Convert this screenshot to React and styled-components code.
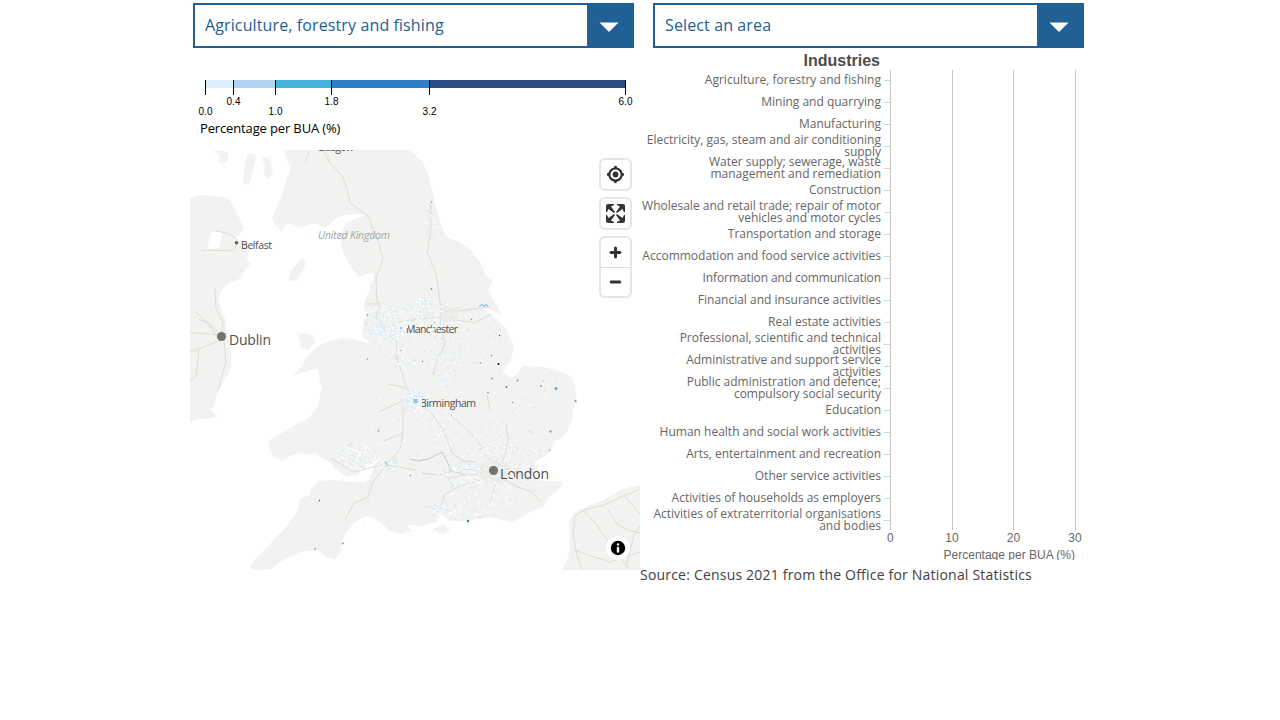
import React from "react";
import styled, { createGlobalStyle } from "styled-components";

const GlobalStyle = createGlobalStyle`
  body { margin: 0; background: #fff; font-family: "Open Sans", "Noto Sans", sans-serif; color: #414042; }
  * { box-sizing: border-box; }
`;

const Page = styled.main`
  width: 900px;
  height: 720px;
  margin: 0 auto;
  display: grid;
  grid-template-columns: 450px 450px;
`;
const Column = styled.section`
  display: flex;
  flex-direction: column;
  min-width: 0;
`;
const Select = styled.div`
  display: flex;
  flex: none;
  width: ${(p) => p.$width}px;
  height: 45px;
  margin: 3px 0 0 ${(p) => p.$indent}px;
  border: 2px solid #206095;
  background: #fff;
`;
const SelectValue = styled.div`
  flex: 1;
  padding-left: 10px;
  font-size: 16px;
  line-height: 40px;
  letter-spacing: 0.12px;
  font-feature-settings: "liga" 1;
  color: #206095;
`;
const SelectArrow = styled.div`
  width: 45px;
  display: flex;
  align-items: center;
  justify-content: center;
  background: #206095;
  padding: 4px 1px 0 0;
`;

const Legend = styled.div`
  flex: none;
  height: 102px;
  padding: 32px 0 0 15px;
`;
const Bar = styled.div`
  display: flex;
  width: 421px;
  height: 39px;
`;
const Segment = styled.div`
  width: ${(p) => p.$width}px;
`;
const Swatch = styled.div`
  height: 15px;
  border-left: 1px solid #000;
  border-right: ${(p) => (p.$last ? "1px solid #000" : "0")};
  &::before { content: ""; display: block; height: 8px; background: ${(p) => p.$color}; }
`;
const TickLabels = styled.div`
  display: flex;
  justify-content: space-between;
  width: ${(p) => p.$width + 29}px;
  margin-left: -14.5px;
  font: 10px/12px "Liberation Sans", Arial, sans-serif;
  color: #000;
`;
const Tick = styled.span`
  width: 30px;
  flex: none;
  text-align: center;
  padding-top: ${(p) => (p.$low ? 11 : 1)}px;
`;
const LegendTitle = styled.div`
  margin: 0 0 0 -5px;
  font-size: 13px;
  line-height: 18px;
  letter-spacing: -0.14px;
  color: #000;
`;

const MapFrame = styled.div`
  position: relative;
  width: 450px;
  height: 420px;
  overflow: hidden;
  & > svg { display: block; }
`;
const MapControls = styled.div`
  position: absolute;
  top: 10px;
  right: 10px;
  display: flex;
  flex-direction: column;
  gap: 10px;
`;
const ControlGroup = styled.div`
  width: 29px;
  border-radius: 4px;
  background: #fff;
  box-shadow: 0 0 0 2px rgba(0, 0, 0, 0.1);
`;
const ControlButton = styled.button`
  display: block;
  width: 29px;
  height: 29px;
  padding: 0;
  border: 0;
  background: none;
  & + & { border-top: 1px solid #ddd; }
  svg { display: block; }
`;
const Info = styled.div`
  position: absolute;
  right: 10px;
  bottom: 10px;
  width: 24px;
  height: 24px;
  border-radius: 12px;
  background: #fff;
`;

const Chart = styled.div`
  height: 512px;
  overflow: hidden;
`;
const ChartTitle = styled.div`
  width: 240px;
  height: 22px;
  text-align: right;
  font: bold 16px/25px "Liberation Sans", Arial, sans-serif;
  color: #4d4d4d;
`;
const ChartBody = styled.div`
  display: flex;
`;
const Labels = styled.div`
  width: 241px;
  margin-top: -1px;
`;
const Label = styled.div`
  height: 22px;
  display: flex;
  flex-direction: column;
  justify-content: center;
  text-align: right;
  white-space: nowrap;
  font-size: 12px;
  line-height: 12px;
  letter-spacing: ${(p) => (p.$tight ? "-0.1px" : "normal")};
  color: #666;
`;
const Axis = styled.svg`
  display: block;
`;
const AxisValues = styled.div`
  display: flex;
  margin: -1px 0 0 235.5px;
  gap: 31.67px;
  font: 12px/16px "Liberation Sans", Arial, sans-serif;
  color: #666;
  span { width: 30px; text-align: center; }
`;
const AxisTitle = styled.div`
  width: 435px;
  text-align: right;
  font: 12px/18px "Liberation Sans", Arial, sans-serif;
  color: #666;
`;
const Source = styled.div`
  font-size: 14px;
  line-height: 30px;
  letter-spacing: 0.2px;
  color: #414042;
`;

const industries = [
  ["Agriculture, forestry and fishing"],
  ["Mining and quarrying"],
  ["Manufacturing"],
  ["Electricity, gas, steam and air conditioning", "supply"],
  ["Water supply; sewerage, waste", "management and remediation"],
  ["Construction"],
  ["Wholesale and retail trade; repair of motor", "vehicles and motor cycles"],
  ["Transportation and storage"],
  ["Accommodation and food service activities"],
  ["Information and communication"],
  ["Financial and insurance activities"],
  ["Real estate activities"],
  ["Professional, scientific and technical", "activities"],
  ["Administrative and support service", "activities"],
  ["Public administration and defence;", "compulsory social security"],
  ["Education"],
  ["Human health and social work activities"],
  ["Arts, entertainment and recreation"],
  ["Other service activities"],
  ["Activities of households as employers"],
  ["Activities of extraterritorial organisations", "and bodies"],
];

const bands = [
  { from: "0.0", width: 28, color: "#daedfc", low: true },
  { from: "0.4", width: 42, color: "#b0d3f1" },
  { from: "1.0", width: 56, color: "#43b3db", low: true },
  { from: "1.8", width: 98, color: "#2f7fc6" },
  { from: "3.2", width: 197, color: "#2b4c87", low: true, to: "6.0" },
];

const Arrow = () => (
  <svg width="20" height="11" viewBox="0 0 20 11"><path d="M0.5 0.5h19L10 10z" fill="#fff" /></svg>
);

// Built-up areas, grouped: centre x, centre y, spread x, spread y, count
const clusters = [
  [385, 325, 22, 20, 190], [410, 322, 28, 18, 150], [437, 318, 20, 17, 90], [430, 217, 7, 20, 60],
  [445, 352, 16, 34, 130], [412, 401, 13, 11, 110], [432, 412, 22, 14, 60], [386, 332, 10, 8, 60],
  [400, 357, 7, 14, 40], [424, 301, 8, 5, 40],
  [355, 456, 22, 14, 120], [388, 462, 11, 10, 50], [492, 476, 50, 32, 300], [470, 440, 38, 32, 150],
  [430, 375, 24, 30, 75], [465, 476, 28, 12, 90], [437, 510, 16, 9, 50], [420, 450, 55, 40, 90],
  [518, 460, 30, 25, 90], [460, 510, 34, 9, 80], [540, 410, 28, 35, 40], [470, 340, 32, 34, 50],
  [370, 490, 35, 34, 40], [360, 420, 32, 30, 12], [450, 270, 26, 22, 14], [398, 350, 20, 25, 55],
];
const shades = ["#ffffff", "#ffffff", "#fafdff", "#e2f0fb", "#daedfc", "#cfe5f6", "#ffffff", "#dfe6e7"];
const specks = (() => {
  let s = 4711;
  const rnd = () => (s = (s * 16807) % 2147483647) / 2147483647;
  return clusters.flatMap(([cx, cy, rx, ry, n]) =>
    Array.from({ length: n }, () => {
      const a = rnd() * Math.PI * 2;
      const r = Math.sqrt(rnd());
      return {
        x: cx + Math.cos(a) * r * rx,
        y: cy + Math.sin(a) * r * ry,
        w: 0.7 + rnd() * 1.4,
        h: 0.7 + rnd() * 1.1,
        fill: shades[Math.floor(rnd() * shades.length)],
      };
    })
  );
})();

// Areas with a high share: x, y, colour, size
const hotspots = [
  [498.5, 364, "#16233f", 1.8], [506.5, 387, "#2b4c87", 1.5], [499.5, 335.5, "#2b4c87", 1.2], [491.5, 355.5, "#5c86ad", 1.3],
  [492, 378.5, "#5c86ad", 1.5], [517.5, 380.5, "#5c86ad", 1.5], [488, 392.5, "#5aa0cd", 1.6], [512.5, 402.5, "#5c86ad", 1.2],
  [541, 386, "#5aa0cd", 1.5], [556, 388.5, "#5a9bd2", 2.4], [575.5, 401, "#5aa0cd", 1.8], [550.5, 431.5, "#5c86ad", 1.8],
  [549.5, 450, "#5aa0cd", 1.3], [531, 432, "#b0d3f1", 1.5], [468, 521, "#2f7fa6", 2.2], [480, 517, "#8ed0e6", 1.2],
  [319.5, 500.5, "#2b4c87", 1.2], [315, 549, "#5c86ad", 1.4], [343, 543.5, "#5c86ad", 1.5], [367.5, 315, "#5c86ad", 1.2],
  [367.5, 359, "#5c86ad", 1.2], [378.5, 431, "#5c86ad", 1.3], [410.5, 475.5, "#5c86ad", 1.2], [431.5, 202, "#5c86ad", 1.2],
  [431.5, 289, "#5c86ad", 1.4], [471.5, 319.5, "#5c86ad", 1.2], [422.5, 361.5, "#5c86ad", 1.2], [480.5, 363, "#5c86ad", 1.2],
  [415.5, 401, "#9cc0de", 4], [543.5, 381, "#b0d3f1", 1.5], [401, 328, "#8db7db", 1.8], [401, 350.5, "#5c86ad", 1],
];

const Specks = ({ items }) =>
  items.map((p, i) => <rect key={i} x={p.x} y={p.y} width={p.w} height={p.h} fill={p.fill} />);

const BaseMap = () => (
  <svg width="450" height="420" viewBox="190 150 450 420">
    <defs>
      <clipPath id="gb">
        <path d="M284 150H410L417 157L427 172L433 195L440 222L447 237L463 245L480 262L493 280L490 288L496 302L502 315L510 338L513 352L510 362L502 372L513 377L523 366L543 367L563 372L575 385L577 402L568 430L555 440L550 452L533 465L548 480H563L560 488L543 507L513 522L465 521L437 522L405 533L385 527L370 516L342 545L334 560L320 550L283 560L250 568L285 535L311 489L350 482H366L382 456L357 475L330 462L272 455L268 445L318 410V368L293 375L330 341L364 342V303L340 240Z" />
      </clipPath>
    </defs>
    <g fill="#f2f2f0">
      <path d="M284 150L287 160L291 167L286 182L283 192L276 210L272 217L275 225L282 232L285 225L290 223.5L297 227L306 226L313 223.5L318 224L324 228L330 224L335 219L345 215L356 214L367 215.5L355 218L345 225L340 236L341 245L343 252L347 260L353 270L360 277L366 274L373 273L374 279L370 283L370 290L367 297L364 303L364 309L367 313L364 320L362 330L363 337L371 344L361 341L345 338L330 341L318 346L308 355L302 366L293 375L302 373L317 368L320 378L319 383L322 387L320 393L319 404L310 417L287 430L270 440L268 445L272 455L282 461L290 456L302 453L308 455L315 453L321 457L330 462L337 470L347 477L357 475L366 467L382 456L375 464L371 475L366 482L350 482L335 480L318 481L311 489L310 495L300 499L297 513L285 528L270 544L261 553L254 560L249 568L256 570L271 569L283 560L300 552L318 550L327 557L335 560L341 552L342 542L346 532L355 522L368 516L380 522L390 531L400 534L412 531L407 525L421 526L437 522L438 514L443 515L450 521H465L478 519L489 517L513 522L526 514L543 507L548 498L560 488L563 481H546L520 476L536 473L539 466L533 464L550 452L555 440L560 439L568 430L572 420L573 409L577 402L575 385L572 378L563 372L543 367L523 366L517 374L511 378L502 371L510 362L513 352L514 346L510 338L506 329L500 322L493 316L480 306L490 309L502 315L499 309L492 298L488 290L493 280L486 276L480 262L471 250L463 245L457 241L447 237L443 230L440 222L437 210L433 195L430 183L427 172L423 162L417 157L410 150Z" />
      <path d="M190 198L201 195L214 196L224 197L230 200L234 208L238 215L244 229L240 234L234 239L247 242L249 253L246 260L252 262L246 269L238 280L230 282L220 292L219 303L225 319L228 336L231 350L231 365L229 374L223 382L217 394L215 403L211 410L217 417L208 419L196 419L190 423Z" />
      <path d="M248 154Q245 160 244 170Q242 182 245 185L249 184L253 172L256 159Q256 154 252 153Z" />
      <path d="M262 158L267 157L271 163L273 173L268 178L263 174L265 167Z" />
      <path d="M213 151L225 151Q230 154 228 160L224 164L218 162L220 157Z" />
      <path d="M302 258L306 263L303 270L296 281L288 280L291 271Z" />
      <path d="M298 335L304 333L313 336L315 343L308 350L301 348Z" />
      <path d="M433 529L443 524L450 530L443 535Z" />
      <path d="M640 485L622 489L604 500L590 505L574 513L569 522L570 543L568 559L562 570H640Z" />
    </g>
    <path d="M211 232H222L219 248L207 249Z" fill="#fff" />
    <g fill="none" stroke="#dbdbd8" strokeWidth="1">
      <path d="M215 231Q232 233 237 240L235 250Q223 251 201 250" />
      <path d="M215 287L216 309L223 322L222 336L196 312M222 336L215 334L209 324L199 319M222 336Q210 333 190 333M221 340L201 348L190 352M224 340L226 362L218 390M199 350L196 376L190 381M305 162L310 150" />
      <path d="M323 150L330 163L343 177L348 193L350 203L369 217L374 233L378 240L383 259L379 270L376 277L377 302L380 304H366" />
      <path d="M428 254L436 273L438 287L441 308L450 312L490 307M380 305L376 317L384 328L402 321L441 317L456 320L475 323L491 314M441 308L440 326L445 344L438 358L433 375" />
      <path d="M431 203V228L427 254M384 333L397 341L396 355L407 388L415 400L432 414L444 431L452 453L463 461L478 462M388 384L407 388M403 400V432L400 449L386 465L373 482L368 497L354 503L345 520M384 441L403 433M386 465L416 470M330 458L354 472L385 464M450 414L478 440L483 452L492 463M487 395L490 410M506 424L508 441L502 466M453 487L448 479L462 475L485 474M440 510L444 495L460 486L480 480M496 483L490 502M504 480L518 487L532 492L541 502M378 412L405 400" />
      <path d="M639 490L625 495L604 505L584 510L575 516L573 535L577 555L582 570M583 510L596 524L605 537L630 570M608 510L617 524L630 531L640 533M625 496L640 514M574 550L594 557L610 562L640 552M626 567L634 535L640 526" />
    </g>
    <path d="M422 473L438 475L449 472M451 471L464 474" fill="none" stroke="#d0d6d6" strokeWidth="0.9" />
    <path d="M410 459L418 461L428 459L434 456L442 452L447 461L451 472" fill="none" stroke="#b3c3c5" strokeWidth="0.9" />
    <path d="M480 466L491 457L507 462L512 474L500 485L486 481L476 475ZM440 309L460 307L456 321L441 321Z" fill="#ebebe7" />
    <ellipse cx="413" cy="400" rx="10" ry="7" fill="#e6f2fb" />
    <ellipse cx="377" cy="331" rx="8" ry="5" fill="#e7f3fb" />
    <ellipse cx="424" cy="302" rx="7" ry="3" fill="#e7f3fb" />
    <path d="M344 444L352 455M365 442L356 461M348 449L367 453M475 467L467 477L481 484" fill="none" stroke="#fff" strokeWidth="1" />
    <g clipPath="url(#gb)"><Specks items={specks} /></g>
    <path d="M479 306.5l3-2 2 2 2-2 2 2M385 461l3 5" fill="none" stroke="#9dcaea" strokeWidth="1.4" />
    <path d="M457 474l7-5 10 1 4 3" fill="none" stroke="#c9e2f0" strokeWidth="1" />
    <rect x="417" y="293" width="6" height="4" fill="#fbf3ea" />
    {hotspots.map(([x, y, c, r], i) => (
      <rect key={i} x={x - r / 2} y={y - r / 2} width={r} height={r} fill={c} />
    ))}
    <g fontFamily='"Open Sans", "Noto Sans", sans-serif' fill="#50504c">
      <text x="317" y="151.3" fontSize="10.5" textLength="37">Glasgow</text>
      <text x="318" y="239" fontSize="10.5" fontStyle="italic" fill="#a4a4a4" textLength="72">United Kingdom</text>
      <text x="241" y="249" fontSize="10.5" textLength="31">Belfast</text>
      <text x="229" y="345" fontSize="14" textLength="42">Dublin</text>
      <text x="406" y="333" fontSize="10.5" textLength="52">Manchester</text>
      <text x="420" y="407" fontSize="10.5" textLength="56">Birmingham</text>
      <text x="500" y="479" fontSize="14" textLength="49">London</text>
    </g>
    <g fill="#f5f6f5">
      <path d="M405 325h3v3h-2v3h-2zM430 329l3-2 2 3-2 3h-3zM435 325h2v4h-2zM420 399h2v9h-1v-4h-1zM431 399h3v2h-3zM510 472l4 2v5l-3-2zM506 475h4v2h-4z" />
    </g>
    <path d="M432 332l4-2M437 327v3M440 331l2-2" stroke="#a5cfec" strokeWidth="1" />
    <circle cx="221.5" cy="336.5" r="4.5" fill="#73736f" />
    <circle cx="493.5" cy="470.5" r="4.5" fill="#73736f" />
    <circle cx="236.5" cy="242.7" r="1.8" fill="#666662" />
  </svg>
);

const LocateIcon = () => (
  <svg width="29" height="29" viewBox="0 0 20 20" fill="#333">
    <path d="M10 4C9 4 9 5 9 5v.1A5 5 0 0 0 5.1 9H5s-1 0-1 1 1 1 1 1h.1A5 5 0 0 0 9 14.9v.1s0 1 1 1 1-1 1-1v-.1a5 5 0 0 0 3.9-3.9h.1s1 0 1-1-1-1-1-1h-.1A5 5 0 0 0 11 5.1V5s0-1-1-1m0 2.5a3.5 3.5 0 1 1 0 7 3.5 3.5 0 1 1 0-7" />
    <circle cx="10" cy="10" r="2" />
  </svg>
);
const FullscreenIcon = () => (
  <svg width="29" height="29" viewBox="0 0 29 29" fill="#333">
    <path d="M24 16v5.5c0 1.75-.75 2.5-2.5 2.5H16v-1l3-1.5-4-5.5 1-1 5.5 4 1.5-3zM6 16l1.5 3 5.5-4 1 1-4 5.5 3 1.5v1H7.5C5.75 24 5 23.25 5 21.5V16zm7-11v1l-3 1.5 4 5.5-1 1-5.5-4L6 13H5V7.5C5 5.75 5.75 5 7.5 5zm11 2.5c0-1.75-.75-2.5-2.5-2.5H16v1l3 1.5-4 5.5 1 1 5.5-4 1.5 3h1z" />
  </svg>
);
const ZoomInIcon = () => (
  <svg width="29" height="29" viewBox="0 0 29 29" fill="#333">
    <path d="M14.5 8.5c-.75 0-1.5.75-1.5 1.5v3h-3c-.75 0-1.5.75-1.5 1.5S9.25 16 10 16h3v3c0 .75.75 1.5 1.5 1.5S16 19.75 16 19v-3h3c.75 0 1.5-.75 1.5-1.5S19.75 13 19 13h-3v-3c0-.75-.75-1.5-1.5-1.5" />
  </svg>
);
const ZoomOutIcon = () => (
  <svg width="29" height="28" viewBox="0 0 29 29" fill="#333">
    <path d="M10 13c-.75 0-1.5.75-1.5 1.5S9.25 16 10 16h9c.75 0 1.5-.75 1.5-1.5S19.75 13 19 13z" />
  </svg>
);
const InfoIcon = () => (
  <svg width="24" height="24" viewBox="0 0 20 20" fillRule="evenodd">
    <path d="M4 10a6 6 0 1 0 12 0 6 6 0 1 0-12 0m5-3a1 1 0 1 0 2 0 1 1 0 1 0-2 0m0 3a1 1 0 1 1 2 0v3a1 1 0 1 1-2 0" />
  </svg>
);

export default function App() {
  return (
    <>
      <GlobalStyle />
      <Page>
        <Column>
          <Select $width={441} $indent={3}>
            <SelectValue>Agriculture, forestry and fishing</SelectValue>
            <SelectArrow><Arrow /></SelectArrow>
          </Select>
          <Legend>
            <Bar>
              {bands.map((b) => (
                <Segment key={b.from} $width={b.width}>
                  <Swatch $color={b.color} $last={Boolean(b.to)} />
                  <TickLabels $width={b.width}>
                    <Tick $low={b.low}>{b.from}</Tick>
                    {b.to && <Tick>{b.to}</Tick>}
                  </TickLabels>
                </Segment>
              ))}
            </Bar>
            <LegendTitle>Percentage per BUA (%)</LegendTitle>
          </Legend>
          <MapFrame>
            <BaseMap />
            <MapControls>
              <ControlGroup><ControlButton aria-label="Find my location"><LocateIcon /></ControlButton></ControlGroup>
              <ControlGroup><ControlButton aria-label="Enter fullscreen"><FullscreenIcon /></ControlButton></ControlGroup>
              <ControlGroup>
                <ControlButton aria-label="Zoom in"><ZoomInIcon /></ControlButton>
                <ControlButton aria-label="Zoom out"><ZoomOutIcon /></ControlButton>
              </ControlGroup>
            </MapControls>
            <Info><InfoIcon /></Info>
          </MapFrame>
        </Column>
        <Column>
          <Select $width={431} $indent={13}>
            <SelectValue>Select an area</SelectValue>
            <SelectArrow><Arrow /></SelectArrow>
          </Select>
          <Chart>
            <ChartTitle>Industries</ChartTitle>
            <ChartBody>
              <Labels>
                {industries.map((lines) => (
                  <Label key={lines[0]} $tight={lines[0].startsWith("Information")}>
                    {lines.map((l) => <span key={l}>{l}</span>)}
                  </Label>
                ))}
              </Labels>
              <Axis width="200" height="460" viewBox="0 0 200 460" shapeRendering="crispEdges">
                <path d="M9.5 0V460M71.5 0V460M132.5 0V460M194.5 0V460" stroke="#c4c4c4" />
                {industries.map((l, i) => (
                  <path key={l[0]} d={`M3 ${i * 22 + 10.5}h6`} stroke="#d4d4d4" />
                ))}
              </Axis>
            </ChartBody>
            <AxisValues><span>0</span><span>10</span><span>20</span><span>30</span></AxisValues>
            <AxisTitle>Percentage per BUA (%)</AxisTitle>
          </Chart>
          <Source>Source: Census 2021 from the Office for National Statistics</Source>
        </Column>
      </Page>
    </>
  );
}
